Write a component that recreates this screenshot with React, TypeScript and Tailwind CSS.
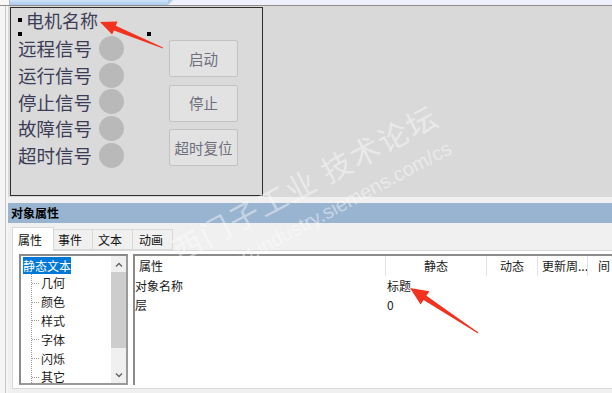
import React from "react";

const cjk = { fontFamily: '"Noto Sans CJK SC", "Noto Sans", sans-serif' };

const signals = ["远程信号", "运行信号", "停止信号", "故障信号", "超时信号"];
const buttons = ["启动", "停止", "超时复位"];
const treeItems = ["几何", "颜色", "样式", "字体", "闪烁", "其它"];

function Handle({ className }: { className: string }) {
  return <div className={`absolute w-[4px] h-[4px] bg-black ${className}`} />;
}

function Arrows() {
  return (
    <svg className="absolute left-0 top-0 pointer-events-none" width="612" height="393">
      <polygon
        fill="#f2321f"
        points="100,22 112.1,34.6 113.9,30.4 163,48.4 163,47.6 115.8,25.8 117.5,21.6"
      />
      <polygon
        fill="#f2321f"
        points="410,288 420.6,304.6 423.6,300 478,333.4 478.4,332.6 426.4,295.8 429.4,291.2"
      />
    </svg>
  );
}

function Watermark() {
  return (
    <div className="absolute left-[312px] top-[196px] -translate-x-1/2 -translate-y-1/2 -rotate-[28deg] pointer-events-none text-white/45 text-center whitespace-nowrap leading-none">
      <div className="text-[30px] tracking-[2px]" style={cjk}>
        西门子工业 技术论坛
      </div>
      <div className="text-[20px] mt-[12px]" style={{ fontFamily: '"Liberation Sans", sans-serif' }}>
        support.industry.siemens.com/cs
      </div>
    </div>
  );
}

export default function App() {
  return (
    <div className="relative w-[612px] h-[393px] overflow-hidden bg-[#f0f0f0] flex flex-col" style={cjk}>
      {/* top strip */}
      <div className="h-[6px] shrink-0 flex border-b border-[#8e8e8e]">
        <div className="w-[10px] shrink-0 bg-[#f7f7f7] border-r border-[#b8b8b8]" />
        <div className="w-[158px] shrink-0 bg-gradient-to-b from-[#cfe3f7] to-[#a9cbee]" />
        <div className="w-0 h-0 border-t-[5px] border-t-[#a9cbee] border-r-[5px] border-r-transparent" />
        <div className="flex-1 bg-[#eef0fb]" />
      </div>

      <div className="flex flex-1 min-w-0">
        {/* left gutter */}
        <div className="w-[8px] shrink-0 bg-[#f6f6f6] flex">
          <div className="w-[6px] border-r border-[#c9c9c9]" />
        </div>

        <div className="flex-1 min-w-0 flex flex-col overflow-hidden">
          {/* canvas */}
          <div className="h-[191px] shrink-0 bg-[#d9d9d9] pl-[2px] pt-[1px]">
            <div className="w-[253px] h-[189px] border border-[#2e2e2e] bg-[#dadada] flex flex-col">
              <div className="relative ml-[9px] w-[129px] h-[26px] flex items-center">
                <span className="pl-[6px] text-[18px] leading-none text-[#3d3d58] -mt-[3px]">电机名称</span>
                <Handle className="left-[-2px] top-[10px]" />
                <Handle className="left-[-2px] top-[24px]" />
                <Handle className="right-[-2px] top-[24px]" />
              </div>
              <div className="flex pl-[7px] mt-[1px]">
                <div className="flex flex-col">
                  {signals.map((s) => (
                    <div key={s} className="h-[26.75px] flex items-center">
                      <span className="w-[74px] text-[18.5px] leading-none text-[#3d3d58]">{s}</span>
                      <div className="ml-[7px] w-[25px] h-[25px] rounded-full bg-[#b9b9b9]" />
                    </div>
                  ))}
                </div>
                <div className="ml-[45px] mt-[5px] flex flex-col gap-[7.5px]">
                  {buttons.map((b) => (
                    <div
                      key={b}
                      className="w-[69px] h-[37px] bg-[#e2e2e2] border border-[#c3c3c3] rounded-[2px] flex items-center justify-center text-[14.5px] text-[#6f6f7c]"
                    >
                      {b}
                    </div>
                  ))}
                </div>
              </div>
            </div>
          </div>

          <div className="h-[6px] shrink-0 bg-[#f0f0f0]" />

          {/* properties header */}
          <div className="h-[20px] shrink-0 bg-[#99b4d1] flex items-center pl-[3px] text-[12px] font-bold text-black">
            对象属性
          </div>

          {/* tabs */}
          <div className="flex-1 flex flex-col bg-[#f0f0f0]">
            <div className="flex pl-[4px] pt-[4px] items-start text-[12px] text-[#111]">
              <div className="relative z-10 w-[42px] h-[24px] bg-white border border-b-0 border-[#d9d9d9] flex items-center pl-[5px]">
                属性
              </div>
              <div className="w-[39px] h-[21px] mt-[2px] border border-l-0 border-[#d9d9d9] flex items-center pl-[4px]">事件</div>
              <div className="w-[40px] h-[21px] mt-[2px] border border-l-0 border-[#d9d9d9] flex items-center pl-[5px]">文本</div>
              <div className="w-[40px] h-[21px] mt-[2px] border border-l-0 border-[#d9d9d9] flex items-center pl-[6px]">动画</div>
            </div>

            <div className="ml-[4px] -mt-[1px] h-[139px] bg-white border border-r-0 border-[#d9d9d9] flex pt-[3px] pl-[6px] text-[12px] text-[#1a1a1a]">
              {/* tree */}
              <div className="w-[109px] shrink-0 h-[131px] border-2 border-[#8a8a8a] border-r-[#9a9a9a] border-b-[#9a9a9a] flex bg-white">
                <div className="relative flex-1">
                  <div className="absolute left-[10px] top-[18px] bottom-0 border-l border-dotted border-[#9a9a9a]" />
                  <div className="ml-[2px] mt-[1px] h-[17px] w-[48px] bg-[#0078d7] text-white flex items-center leading-none">
                    静态文本
                  </div>
                  <div className="flex flex-col">
                    {treeItems.map((t) => (
                      <div key={t} className="h-[18.8px] flex items-center">
                        <div className="ml-[11px] w-[7px] border-t border-dotted border-[#9a9a9a]" />
                        <span className="ml-[2px] leading-none">{t}</span>
                      </div>
                    ))}
                  </div>
                </div>
                <div className="w-[15px] bg-[#f0f0f0] flex flex-col">
                  <div className="h-[16px] flex items-center justify-center">
                    <svg width="8" height="5" viewBox="0 0 8 5">
                      <path d="M1 4.5 L4 1.5 L7 4.5" fill="none" stroke="#606060" strokeWidth="1.3" />
                    </svg>
                  </div>
                  <div className="h-[76px] bg-[#cdcdcd]" />
                  <div className="flex-1" />
                  <div className="h-[16px] flex items-center justify-center">
                    <svg width="8" height="5" viewBox="0 0 8 5">
                      <path d="M1 0.5 L4 3.5 L7 0.5" fill="none" stroke="#606060" strokeWidth="1.3" />
                    </svg>
                  </div>
                </div>
              </div>

              {/* property grid */}
              <div className="ml-[5px] flex-1 min-w-0 h-[131px] border-t-2 border-l-2 border-[#8a8a8a] flex flex-col overflow-hidden">
                <div className="h-[20px] flex items-center">
                  <div className="w-[251px] shrink-0 h-full flex items-center pl-[4px] border-r border-[#e3e3e3]">属性</div>
                  <div className="w-[101px] shrink-0 h-full flex items-center justify-center border-r border-[#e3e3e3]">静态</div>
                  <div className="w-[51px] shrink-0 h-full flex items-center justify-end pr-[13px] border-r border-[#e3e3e3]">动态</div>
                  <div className="w-[50px] shrink-0 h-full flex items-center pl-[4px] border-r border-[#e3e3e3] whitespace-nowrap overflow-hidden">更新周...</div>
                  <div className="flex-1 h-full flex items-center pl-[10px] overflow-hidden whitespace-nowrap">间</div>
                </div>
                <div className="h-[19px] flex items-center">
                  <div className="w-[252px] shrink-0">对象名称</div>
                  <div>标题</div>
                </div>
                <div className="h-[19px] flex items-center">
                  <div className="w-[252px] shrink-0">层</div>
                  <div>0</div>
                </div>
              </div>
            </div>
          </div>
        </div>
      </div>

      <Watermark />
      <Arrows />
    </div>
  );
}
